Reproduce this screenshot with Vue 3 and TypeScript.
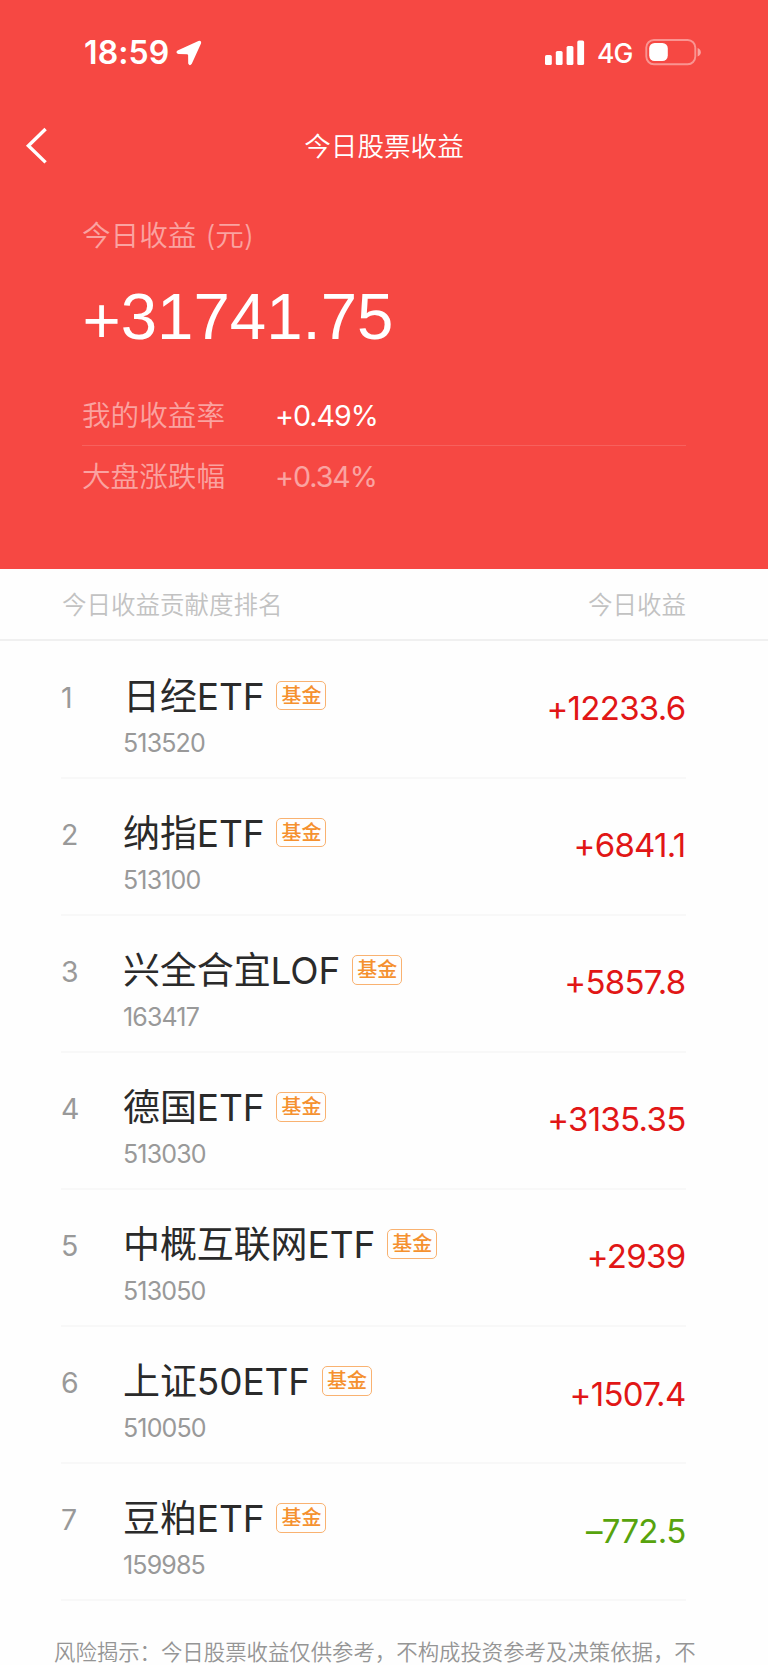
<script setup lang="ts">
interface Holding {
  name: string
  code: string
  profit: string
}

const holdings: Holding[] = [
  { name: '日经ETF', code: '513520', profit: '+12233.6' },
  { name: '纳指ETF', code: '513100', profit: '+6841.1' },
  { name: '兴全合宜LOF', code: '163417', profit: '+5857.8' },
  { name: '德国ETF', code: '513030', profit: '+3135.35' },
  { name: '中概互联网ETF', code: '513050', profit: '+2939' },
  { name: '上证50ETF', code: '510050', profit: '+1507.4' },
  { name: '豆粕ETF', code: '159985', profit: '–772.5' },
]
</script>

<template>
  <div class="screen">
    <header class="hero">
      <div class="status">
        <span class="time">18:59</span>
        <svg class="locate" width="26" height="26" viewBox="0 0 26 26">
          <path d="M1.6 10.6 L22.4 1 Q25.8 0 25 3.6 L15.8 23.8 Q13.8 26.6 12.2 23.6 L12.1 15 L11.3 14.2 L2.4 14 Q-1 12.6 1.6 10.6 Z" fill="#fff" />
        </svg>
        <svg class="signal" width="40" height="26" viewBox="0 0 40 26" fill="#fff">
          <rect x="0" y="15" width="6.8" height="10" rx="1.6" />
          <rect x="10.8" y="11" width="6.8" height="14" rx="1.6" />
          <rect x="21.6" y="6" width="6.8" height="19" rx="1.6" />
          <rect x="32.3" y="0.4" width="6.8" height="24.6" rx="1.6" />
        </svg>
        <span class="network">4G</span>
        <svg class="battery" width="57" height="27" viewBox="0 0 57 27">
          <rect x="1.3" y="1" width="49" height="24.2" rx="7.6" fill="none" stroke="#fff" stroke-opacity=".42" stroke-width="1.9" />
          <rect x="4.2" y="4" width="18.6" height="18" rx="5.4" fill="#fff" />
          <path d="M52.6 9 Q55.8 10.2 55.8 13.2 Q55.8 16.2 52.6 17.4 Z" fill="#fff" fill-opacity=".5" />
        </svg>
      </div>
      <nav class="nav">
        <svg class="back" width="24" height="38" viewBox="0 0 24 38">
          <path d="M21.6 2 L4.4 18.8 L21.6 35.4" fill="none" stroke="#fff" stroke-width="3.4" />
        </svg>
        <h1 class="title">今日股票收益</h1>
      </nav>
      <div class="summary">
        <div class="label">今日收益 (元)</div>
        <div class="total"><span class="sign">+</span>31741.75</div>
        <div class="rate">
          <span class="rate-name">我的收益率</span>
          <span class="rate-value">+0.49%</span>
        </div>
        <div class="rate market">
          <span class="rate-name">大盘涨跌幅</span>
          <span class="rate-value">+0.34%</span>
        </div>
      </div>
    </header>

    <div class="list-head">
      <span>今日收益贡献度排名</span>
      <span>今日收益</span>
    </div>

    <ol class="list">
      <li v-for="(h, i) in holdings" :key="h.code" class="row">
        <span class="rank">{{ i + 1 }}</span>
        <div class="info">
          <div class="name-line">
            <span class="name">{{ h.name }}</span>
            <span class="tag">基金</span>
          </div>
          <div class="code">{{ h.code }}</div>
        </div>
        <span class="profit" :class="{ loss: !h.profit.startsWith('+') }">{{ h.profit }}</span>
      </li>
    </ol>

    <p class="notice">风险揭示：今日股票收益仅供参考，不构成投资参考及决策依据，不</p>
  </div>
</template>

<style>
body {
  margin: 0;
  background: #fefefe;
}
</style>

<style scoped>
.screen {
  width: 768px;
  height: 1665px;
  overflow: hidden;
  box-sizing: border-box;
  background: #fefefe;
  font-family: Inter, "Noto Sans CJK SC", sans-serif;
  font-weight: 400;
}
.hero {
  height: 568.5px;
  background: #f64843;
  color: #fff;
}
.status {
  display: flex;
  align-items: center;
  height: 105px;
  padding-left: 84px;
}
.time {
  width: 92px;
  font-size: 32px;
  font-weight: 600;
  letter-spacing: 0.1px;
  line-height: 40px;
}
.signal {
  margin-left: 343px;
}
.network {
  width: 48px;
  margin-left: 12px;
  font-size: 26.5px;
  font-weight: 500;
  letter-spacing: -1px;
  line-height: 40px;
}
.nav {
  display: grid;
  grid-template-columns: 84px 1fr 84px;
  align-items: center;
  height: 81px;
}
.back {
  margin-left: 24px;
}
.title {
  margin: 0;
  font-size: 26.6px;
  font-weight: 350;
  line-height: 40px;
  text-align: center;
}
.summary {
  padding: 29px 82px 0 82px;
}
.label {
  height: 42px;
  font-size: 28.6px;
  font-weight: 350;
  line-height: 42px;
  word-spacing: 1px;
  color: rgba(255, 255, 255, 0.5);
}
.total {
  height: 129px;
  padding-left: 0.5px;
  font-family: "Liberation Sans", Arial, sans-serif;
  font-size: 65.4px;
  line-height: 119px;
}
.sign {
  display: inline-block;
  transform: translateY(4px);
}
.rate {
  display: flex;
  height: 59px;
  line-height: 60px;
  font-size: 28.6px;
  border-bottom: 1px solid rgba(255, 255, 255, 0.14);
}
.rate.market {
  height: 63px;
  line-height: 62px;
  border-bottom: 0;
}
.rate-name {
  width: 193px;
  font-weight: 350;
  color: rgba(255, 255, 255, 0.5);
}
.rate-value {
  font-weight: 400;
  letter-spacing: -1px;
}
.market .rate-value {
  color: rgba(255, 255, 255, 0.5);
}
.list-head {
  display: flex;
  justify-content: space-between;
  box-sizing: border-box;
  height: 72.5px;
  padding: 0 82px 0 62px;
  border-bottom: 2px solid #f0f0f0;
  font-size: 24.5px;
  font-weight: 350;
  line-height: 72px;
  color: #c2c2c2;
}
.list {
  margin: 0;
  padding: 0.6px 82px 0 61px;
  list-style: none;
}
.row {
  display: flex;
  box-sizing: border-box;
  height: 137.1px;
  border-bottom: 2px solid #f8f8f8;
}
.rank {
  width: 62px;
  padding-top: 36px;
  font-size: 28.5px;
  line-height: 40px;
  color: #999;
}
.info {
  flex: 1;
  padding-top: 30px;
}
.name-line {
  display: flex;
  align-items: center;
  gap: 12px;
  height: 50px;
}
.name {
  font-size: 37px;
  line-height: 50px;
  letter-spacing: -0.1px;
  color: #2a2a2a;
}
.tag {
  box-sizing: border-box;
  width: 50px;
  height: 29.5px;
  margin-bottom: 2px;
  border: 1.5px solid #f9b271;
  border-radius: 5px;
  font-size: 20px;
  font-weight: 500;
  line-height: 28px;
  text-align: center;
  color: #f5912f;
}
.code {
  font-size: 25px;
  line-height: 42px;
  letter-spacing: -0.85px;
  color: #999;
}
.profit {
  padding-top: 41.5px;
  margin-right: 0.5px;
  font-size: 33px;
  line-height: 50px;
  letter-spacing: -0.7px;
  color: #e11616;
}
.profit.loss {
  color: #57a30d;
}
.notice {
  margin: 31px 0 0;
  padding-left: 54px;
  font-size: 21.4px;
  font-weight: 350;
  line-height: 40px;
  color: #959595;
  white-space: nowrap;
}
</style>
